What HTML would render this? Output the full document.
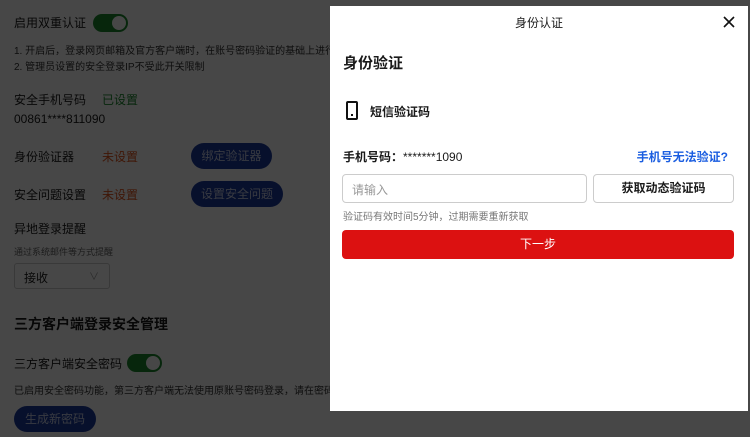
<!DOCTYPE html>
<html><head><meta charset="utf-8"><style>
*{margin:0;padding:0;box-sizing:border-box}
body{width:750px;height:437px;overflow:hidden;position:relative;background:#fff;font-family:"Liberation Sans","Noto Sans CJK SC",sans-serif;color:#1a1a1a}
.a{position:absolute;white-space:nowrap}
.sw{position:absolute;width:35px;height:18px;border-radius:9px;background:#1a8a2e}
.sw:after{content:"";position:absolute;right:2px;top:2px;width:14px;height:14px;border-radius:50%;background:#fff}
.btn{position:absolute;height:26px;border-radius:13px;background:#1c3a9e;color:#c8d0ea;font-size:12px;line-height:26px;text-align:center}
.ov{position:absolute;left:0;top:0;width:750px;height:437px;background:rgba(0,0,0,0.72)}
.m{position:absolute;left:330px;top:6px;width:418px;height:405px;background:#fff}
</style></head><body>
<div class="a" style="left:14px;top:14px;font-size:12px">启用双重认证</div>
<div class="sw" style="left:93px;top:14px"></div>
<div class="a" style="left:14px;top:42px;font-size:10px;color:#333">1. 开启后，登录网页邮箱及官方客户端时，在账号密码验证的基础上进行二次验证</div>
<div class="a" style="left:14px;top:58px;font-size:10px;color:#333">2. 管理员设置的安全登录IP不受此开关限制</div>
<div class="a" style="left:14px;top:91px;font-size:12px">安全手机号码</div>
<div class="a" style="left:102px;top:91px;font-size:12px;color:#1a8a2e">已设置</div>
<div class="a" style="left:14px;top:112px;font-size:12px">00861****811090</div>
<div class="a" style="left:14px;top:148px;font-size:12px">身份验证器</div>
<div class="a" style="left:102px;top:148px;font-size:12px;color:#e0531c">未设置</div>
<div class="btn" style="left:191px;top:143px;width:81px">绑定验证器</div>
<div class="a" style="left:14px;top:186px;font-size:12px">安全问题设置</div>
<div class="a" style="left:102px;top:186px;font-size:12px;color:#e0531c">未设置</div>
<div class="btn" style="left:191px;top:181px;width:92px">设置安全问题</div>
<div class="a" style="left:14px;top:220px;font-size:12px">异地登录提醒</div>
<div class="a" style="left:14px;top:245px;font-size:9px;color:#666">通过系统邮件等方式提醒</div>
<div class="a" style="left:14px;top:263px;width:96px;height:26px;border:1px solid #ccc;border-radius:3px;font-size:12px;padding:5px 9px">接收<span style="position:absolute;right:10px;top:4px;color:#999;font-size:10px">∨</span></div>
<div class="a" style="left:14px;top:314px;font-size:14px;font-weight:bold">三方客户端登录安全管理</div>
<div class="a" style="left:14px;top:355px;font-size:12px">三方客户端安全密码</div>
<div class="sw" style="left:127px;top:354px"></div>
<div class="a" style="left:14px;top:382px;font-size:10px;color:#333">已启用安全密码功能，第三方客户端无法使用原账号密码登录，请在密码框</div>
<div class="btn" style="left:14px;top:406px;width:82px">生成新密码</div>
<div class="ov"></div>
<div class="m">
<div class="a" style="left:0;width:418px;text-align:center;top:8px;font-size:12px">身份认证</div>
<svg class="a" style="left:393px;top:10px" width="12" height="12" viewBox="0 0 12 12"><path d="M1 1L11 11M11 1L1 11" stroke="#111" stroke-width="1.6"/></svg>
<div class="a" style="left:13px;top:46px;font-size:15px;font-weight:bold">身份验证</div>
<div class="a" style="left:16px;top:95px;width:12px;height:19px;border:2px solid #111;border-radius:2px"><div style="position:absolute;left:3px;bottom:2px;width:2px;height:2px;background:#111"></div></div>
<div class="a" style="left:40px;top:97px;font-size:12px;font-weight:bold">短信验证码</div>
<div class="a" style="left:13px;top:142px;font-size:12px;font-weight:bold">手机号码：<span style="font-weight:normal">*******1090</span></div>
<div class="a" style="right:20px;top:142px;font-size:12px;color:#1a5de0;font-weight:bold">手机号无法验证?</div>
<div class="a" style="left:12px;top:168px;width:245px;height:29px;border:1px solid #ccc;border-radius:4px;font-size:12px;color:#999;padding:6px 9px">请输入</div>
<div class="a" style="left:263px;top:168px;width:141px;height:29px;border:1px solid #ccc;border-radius:4px;font-size:12px;text-align:center;line-height:27px;font-weight:bold">获取动态验证码</div>
<div class="a" style="left:13px;top:202px;font-size:10px;color:#777">验证码有效时间5分钟，过期需要重新获取</div>
<div class="a" style="left:12px;top:224px;width:392px;height:29px;border-radius:4px;background:#dc1111;color:#fff;font-size:12px;text-align:center;line-height:29px">下一步</div>
</div>
</body></html>
